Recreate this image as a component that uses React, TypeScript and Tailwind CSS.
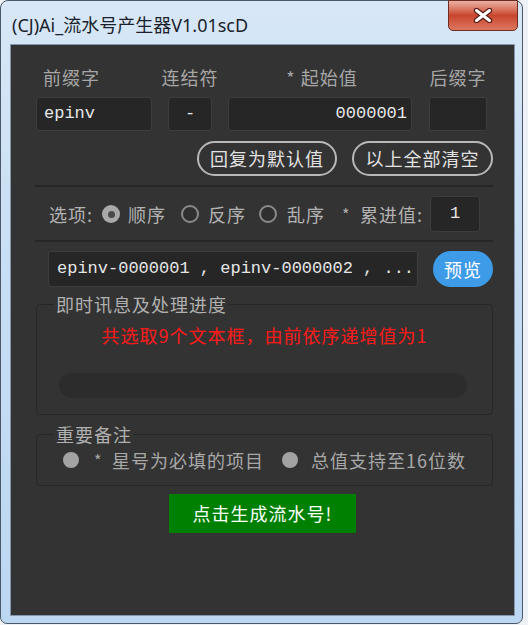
import React from 'react';

// (CJ)Ai_流水号产生器 — dark dialog inside a Win7 style frame

function Radio({ checked }: { checked?: boolean }) {
  if (checked) {
    return (
      <span className="w-[18px] h-[18px] shrink-0 rounded-full bg-[#a9a9a9] flex items-center justify-center">
        <span className="w-[7px] h-[7px] rounded-full bg-[#4a4a4a]" />
      </span>
    );
  }
  return <span className="w-[18px] h-[18px] shrink-0 rounded-full border-2 border-[#8a8a8a] bg-[#2f2f2f]" />;
}

function CloseIcon() {
  return (
    <svg width="20" height="15" viewBox="-10 -7.5 20 15">
      <path d="M-6.5,-5 L6.5,5 M-6.5,5 L6.5,-5" stroke="#5a2018" strokeWidth="5.5" strokeLinecap="round" />
      <path d="M-6.5,-5 L6.5,5 M-6.5,5 L6.5,-5" stroke="#ffffff" strokeWidth="3" strokeLinecap="round" />
    </svg>
  );
}

export default function App() {
  return (
    <div className="w-[528px] h-[625px] bg-[#eef2f7] overflow-hidden font-['Noto_Sans_CJK_SC',sans-serif]">
      <div className="w-[523px] h-[624px] rounded-t-[8px] rounded-b-[7px] border border-[#4b5868] bg-gradient-to-b from-[#d7e7f7] via-[#c6ddf4] to-[#bcd7f2] flex flex-col">
        {/* title bar */}
        <div className="h-[43px] flex justify-between items-start pl-[11px] pr-[4px]">
          <div className="pt-[14px] leading-[20px] text-[18px] text-[#1b1f2a] font-['Noto_Sans','Noto_Sans_CJK_SC',sans-serif]">
            (CJ)Ai_流水号产生器V1.01scD
          </div>
          <div className="-mt-[1px] w-[70px] h-[31px] rounded-b-[5px] border border-[#6d2b22] bg-gradient-to-b from-[#eab0a2] via-[#c9452e] to-[#dd7760] flex items-center justify-center">
            <CloseIcon />
          </div>
        </div>

        {/* client area */}
        <div className="ml-[9px] w-[505px] h-[572px] border border-[#8396ab] bg-[#333333] text-[18px] tracking-[1px] flex flex-col">
          {/* labels */}
          <div className="mt-[21px] pl-[25px] flex gap-[16px] leading-[22px] text-[#a6a6a6]">
            <div className="w-[116px] pl-[7px] whitespace-nowrap">前缀字</div>
            <div className="w-[44px] flex justify-center whitespace-nowrap">连结符</div>
            <div className="w-[184px] flex justify-center whitespace-nowrap pl-[4px]">* 起始值</div>
            <div className="w-[58px] ml-[1px] flex justify-center whitespace-nowrap">后缀字</div>
          </div>

          {/* inputs */}
          <div className="mt-[9px] pl-[25px] flex gap-[16px] h-[34px] font-['Liberation_Mono',monospace] text-[17px] tracking-normal text-[#e6e6e6]">
            <div className="w-[116px] rounded-[3px] border border-[#3d3d3d] bg-[#262626] flex items-center pl-[7px]">epinv</div>
            <div className="w-[44px] rounded-[3px] border border-[#3d3d3d] bg-[#262626] flex items-center justify-center">-</div>
            <div className="w-[184px] rounded-[3px] border border-[#3d3d3d] bg-[#262626] flex items-center justify-end pr-[4px]">0000001</div>
            <div className="w-[58px] ml-[1px] rounded-[3px] border border-[#3d3d3d] bg-[#262626]" />
          </div>

          {/* reset buttons */}
          <div className="mt-[10px] pr-[21px] flex justify-end gap-[15px]">
            <div className="w-[140px] h-[35px] rounded-full border-2 border-[#b8b8b8] text-[#e2e2e2] flex items-center justify-center">回复为默认值</div>
            <div className="w-[141px] h-[35px] rounded-full border-2 border-[#b8b8b8] text-[#e2e2e2] flex items-center justify-center">以上全部清空</div>
          </div>

          <div className="mt-[9px] ml-[24px] mr-[21px] h-[2px] bg-[#262626]" />

          {/* options */}
          <div className="mt-[9px] pl-[38px] h-[36px] flex items-center text-[#b2b2b2] whitespace-nowrap">
            <span className="w-[53px]">选项:</span>
            <Radio checked />
            <span className="ml-[8px] w-[53px]">顺序</span>
            <Radio />
            <span className="ml-[9px] w-[51px]">反序</span>
            <Radio />
            <span className="ml-[10px] w-[55px]">乱序</span>
            <span className="w-[18px] text-[16px]">*</span>
            <span className="w-[70px]">累进值:</span>
            <div className="w-[50px] h-[36px] rounded-[3px] border border-[#3d3d3d] bg-[#262626] flex items-center justify-center font-['Liberation_Mono',monospace] text-[17px] tracking-normal text-[#e6e6e6]">1</div>
          </div>

          <div className="mt-[8px] ml-[24px] mr-[21px] h-[2px] bg-[#262626]" />

          {/* preview */}
          <div className="mt-[9px] pl-[37px] flex gap-[15px] h-[36px]">
            <div className="w-[370px] rounded-[3px] border border-[#3d3d3d] bg-[#262626] flex items-center pl-[8px] whitespace-pre font-['Liberation_Mono',monospace] text-[17px] tracking-normal text-[#e6e6e6]">
              epinv-0000001 , epinv-0000002 , ...
            </div>
            <div className="w-[60px] rounded-full bg-[#3e9be7] text-white flex items-center justify-center">预览</div>
          </div>

          {/* progress group */}
          <fieldset className="mt-[6px] ml-[25px] w-[457px] rounded-[4px] border border-[#272727] pb-[16px]">
            <legend className="ml-[17px] px-[2px] leading-[22px] text-[#b0b0b0]">即时讯息及处理进度</legend>
            <div className="mt-[9px] leading-[22px] text-center text-[#ff1a1a]">共选取9个文本框，由前依序递增值为1</div>
            <div className="mt-[27px] ml-[22px] w-[408px] h-[25px] rounded-full bg-[#2c2c2c]" />
          </fieldset>

          {/* notes group */}
          <fieldset className="mt-[8px] ml-[25px] w-[457px] rounded-[4px] border border-[#272727] pb-[14px]">
            <legend className="ml-[17px] px-[2px] leading-[22px] text-[#b0b0b0]">重要备注</legend>
            <div className="mt-[4px] pl-[26px] h-[22px] flex items-center text-[#a8a8a8] whitespace-nowrap">
              <span className="w-[16px] h-[16px] rounded-full bg-[#a3a3a3]" />
              <span className="ml-[15px] w-[18px] text-[16px]">*</span>
              <span className="w-[170px]">星号为必填的项目</span>
              <span className="w-[16px] h-[16px] rounded-full bg-[#a3a3a3]" />
              <span className="ml-[13px]">总值支持至16位数</span>
            </div>
          </fieldset>

          {/* generate */}
          <div className="mt-[8px] mx-auto w-[187px] h-[39px] bg-[#008000] text-white flex items-center justify-center">点击生成流水号!</div>
        </div>
      </div>
    </div>
  );
}
